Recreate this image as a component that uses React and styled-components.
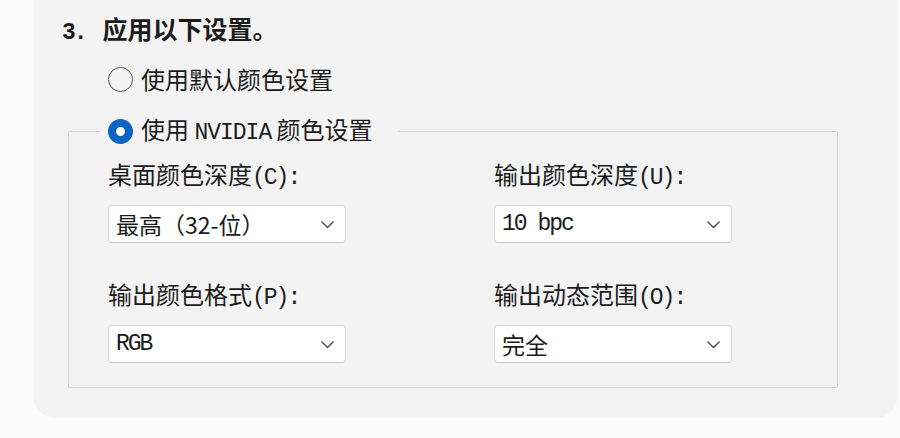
import React from 'react';
import styled, { createGlobalStyle } from 'styled-components';

const GlobalStyle = createGlobalStyle`
  html, body {
    margin: 0;
    padding: 0;
    background: #fbfbfb;
  }
  body {
    font-family: "Noto Sans CJK SC", "Noto Sans", sans-serif;
    color: #1b1b1b;
  }
`;

const fields = [
  { label: '桌面颜色深度', key: '(C):', value: '最高（32-位）' },
  { label: '输出颜色深度', key: '(U):', value: '10 bpc', mono: true },
  { label: '输出颜色格式', key: '(P):', value: 'RGB', mono: true },
  { label: '输出动态范围', key: '(O):', value: '完全' },
];

const Chevron = () => (
  <svg width="15" height="9" viewBox="0 0 15 9" fill="none">
    <path d="M1.5 1.5l6 6 6-6" stroke="#4a4a4a" strokeWidth="1.3" />
  </svg>
);

const Radio = ({ checked, children }) => (
  <RadioRow>
    <RadioCircle checked={checked} />
    <span>{children}</span>
  </RadioRow>
);

const App = () => (
  <>
    <GlobalStyle />
    <Page>
      <Panel>
        <Title>
          <Step>3.</Step>
          <span>应用以下设置。</span>
        </Title>
        <Options>
          <Radio>使用默认颜色设置</Radio>
        </Options>
        <Group>
          <Legend>
            <Radio checked>
              使用 <Half wide>NVIDIA</Half> 颜色设置
            </Radio>
          </Legend>
          <Fields>
            {fields.map(field => (
              <Field key={field.key}>
                <Label>
                  {field.label}
                  <Half>{field.key}</Half>
                </Label>
                <Select>
                  {field.mono ? <Half>{field.value}</Half> : <span>{field.value}</span>}
                  <Chevron />
                </Select>
              </Field>
            ))}
          </Fields>
        </Group>
      </Panel>
    </Page>
  </>
);

export default App;

const Page = styled.div`
  width: 900px;
  height: 438px;
  padding: 0 2px 20px 33px;
  box-sizing: border-box;
`;

const Panel = styled.div`
  height: 418px;
  background: #f3f3f3;
  border-radius: 0 0 22px 22px;
  padding: 11px 0 0 29px;
  box-sizing: border-box;
`;

const Title = styled.div`
  display: flex;
  align-items: baseline;
  gap: 17px;
  font-size: 25px;
  font-weight: 700;
  line-height: 34px;
`;

const Step = styled.span`
  font-family: "Liberation Mono", monospace;
  font-size: 23px;
  font-weight: 700;
  letter-spacing: -2px;
`;

const Options = styled.div`
  margin: 12px 0 0 46px;
`;

const RadioRow = styled.div`
  display: flex;
  align-items: center;
  gap: 8px;
  font-size: 24px;
  line-height: 34px;
`;

const RadioCircle = styled.span`
  width: 25px;
  height: 25px;
  border-radius: 50%;
  box-sizing: border-box;
  flex-shrink: 0;
  background: ${({ checked }) => (checked ? '#fff' : 'transparent')};
  border: ${({ checked }) =>
    checked ? '8.5px solid #0a64c0' : '1.5px solid #555'};
`;

const Half = styled.span`
  font-family: "Liberation Mono", monospace;
  font-size: 23px;
  letter-spacing: ${({ wide }) => (wide ? '-1px' : '-2px')};
`;

const Group = styled.fieldset`
  margin: 16px 60px 0 6px;
  padding: 8px 0 24px 39px;
  border: 1px solid #d3d3d3;
  border-radius: 2px;
  min-width: 0;
`;

const Legend = styled.legend`
  padding: 0 25px 0 8px;
  margin-left: -8px;
`;

const Fields = styled.div`
  display: grid;
  grid-template-columns: 238px 238px;
  column-gap: 148px;
  row-gap: 35px;
`;

const Field = styled.div`
  display: flex;
  flex-direction: column;
  gap: 11px;
`;

const Label = styled.div`
  font-size: 24px;
  line-height: 32px;
`;

const Select = styled.div`
  height: 38px;
  box-sizing: border-box;
  display: flex;
  align-items: center;
  justify-content: space-between;
  padding: 0 10px 0 7px;
  background: #fff;
  border: 1px solid #d4d4d4;
  border-bottom-color: #c4c4c4;
  border-radius: 4px;
  font-size: 23px;
  line-height: 1;
`;
